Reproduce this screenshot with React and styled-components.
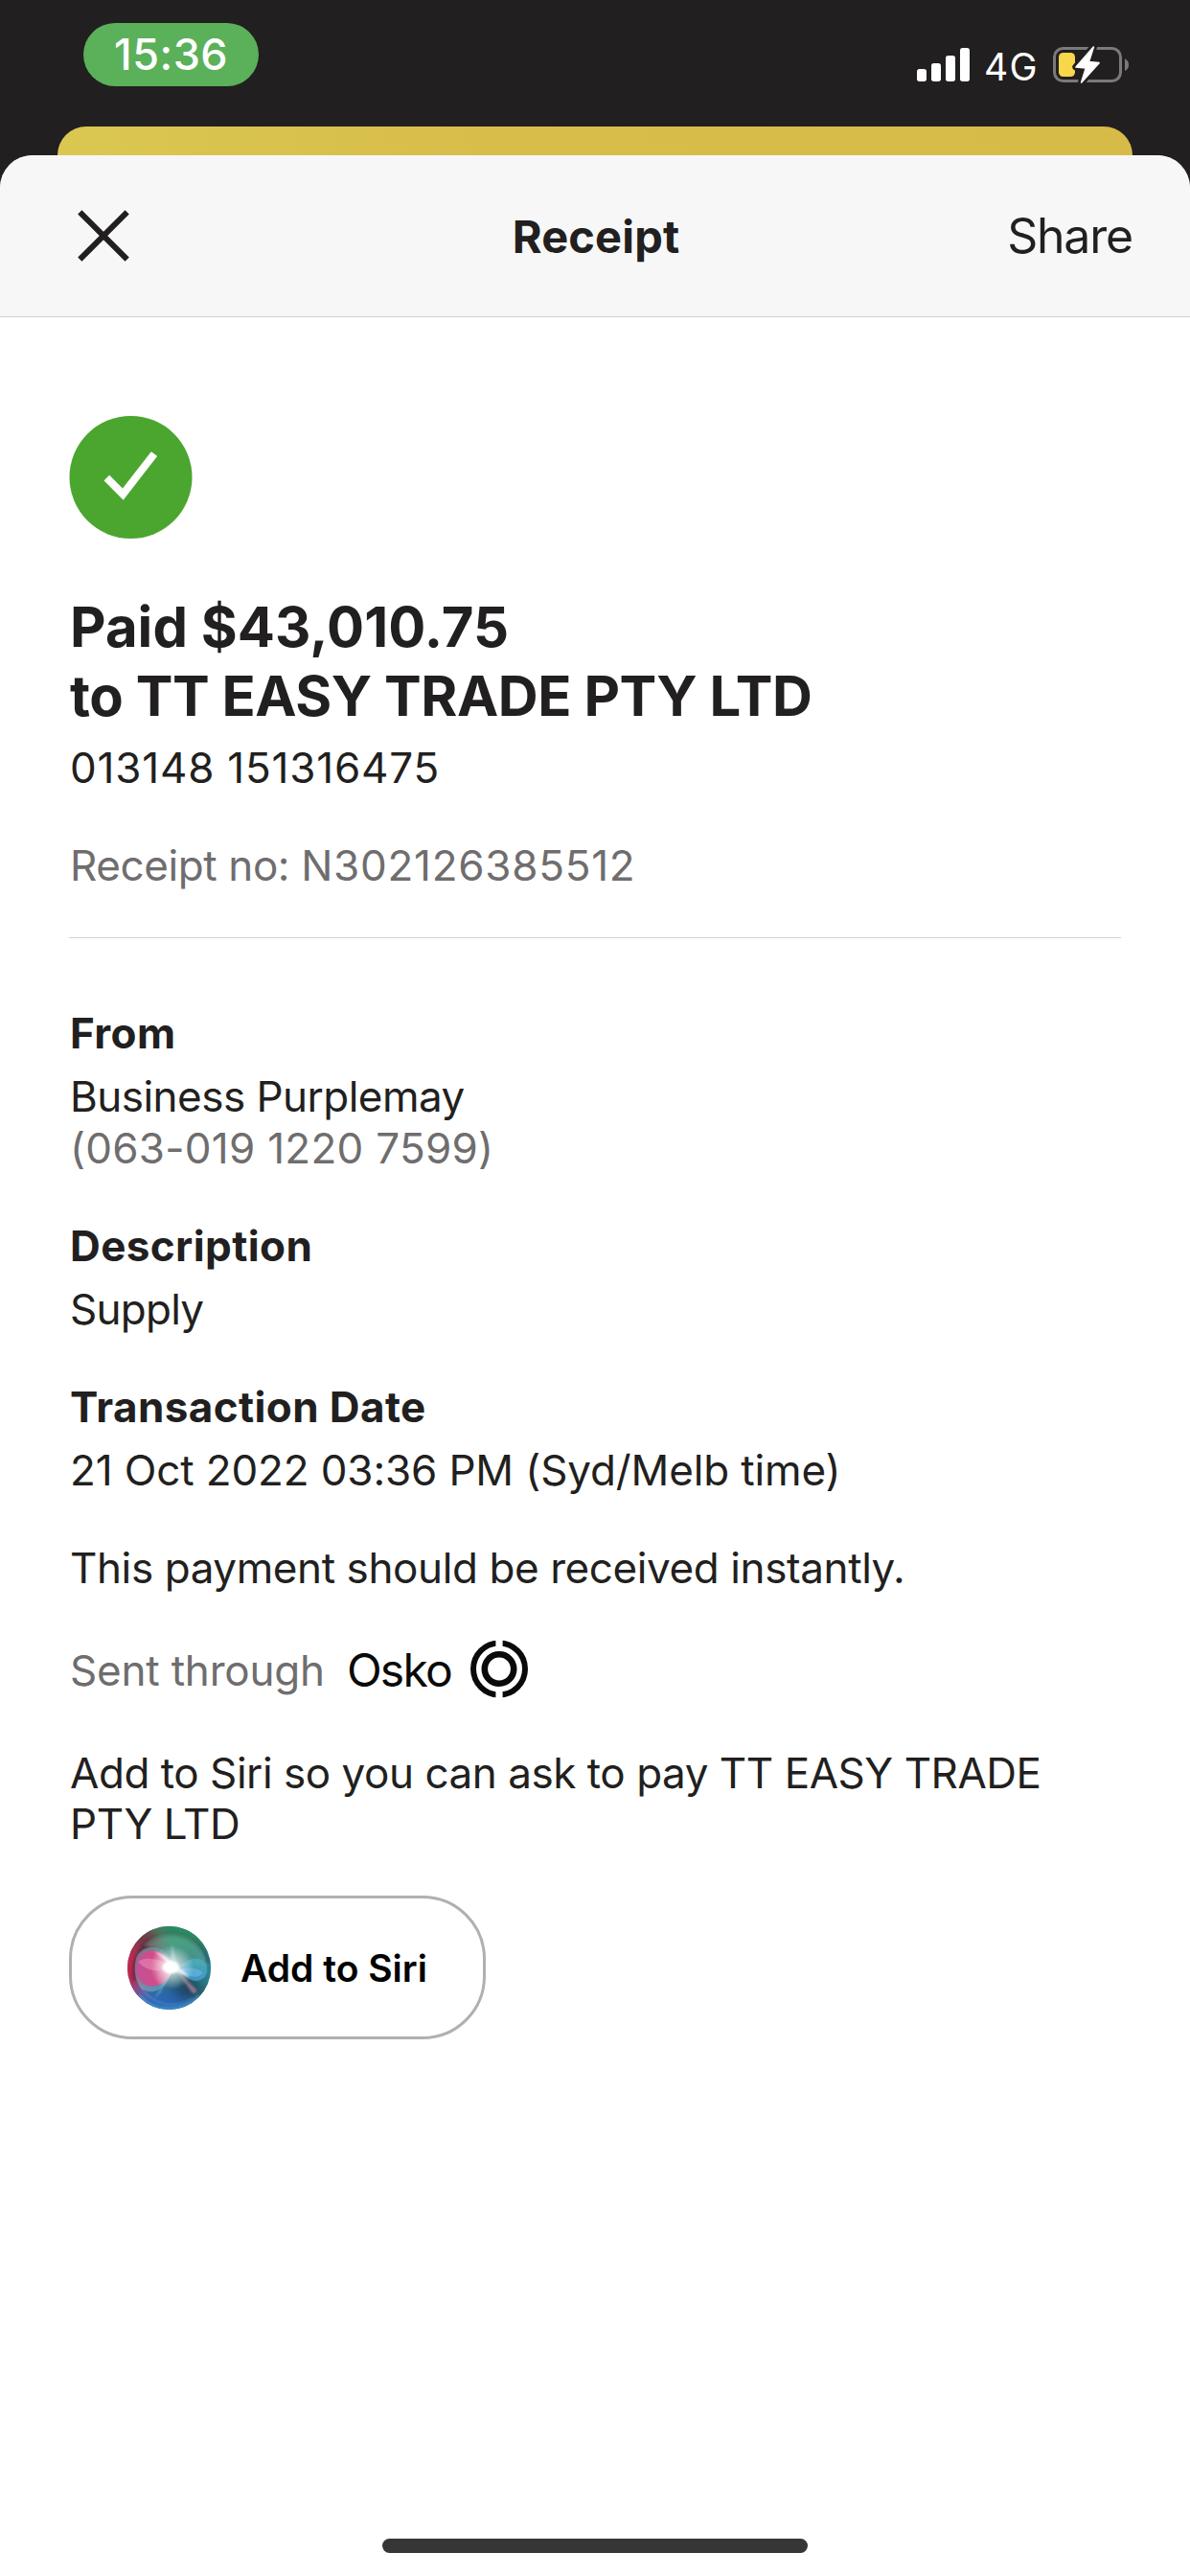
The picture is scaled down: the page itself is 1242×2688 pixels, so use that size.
import React, { Component } from 'react';
import styled, { createGlobalStyle } from 'styled-components';

const GlobalStyle = createGlobalStyle`
:root{
    --mainDark:#221f20;
    --mainGrey:#6f6d6e;
    --navGrey:#f7f7f7;
    --paidGreen:#4ba630;
    --pillGreen:#5bb05a;
}
body{
    margin:0;
    background:var(--mainDark);
    color:var(--mainDark);
    font-family:Inter, "Liberation Sans", sans-serif;
}
p, h1, h2, h3{
    margin:0;
}
`

const PhoneWrapper = styled.div`
display:flex;
flex-direction:column;
width:1242px;
height:2688px;
overflow:hidden;
background:var(--mainDark);
`
const StatusWrapper = styled.header`
display:flex;
justify-content:space-between;
align-items:flex-start;
box-sizing:border-box;
height:132px;
padding:24px 64px 0 87px;
color:#fff;
`
const TimePill = styled.div`
box-sizing:border-box;
width:183px;
height:66px;
padding-left:32px;
border-radius:33px;
background:var(--pillGreen);
font-size:45px;
font-weight:500;
line-height:66px;
letter-spacing:0.5px;
`
const StatusIcons = styled.div`
display:flex;
align-items:flex-start;
padding-top:24px;
`
const SignalIcon = styled.svg`
width:55px;
height:35px;
margin-top:2px;
`
const Network = styled.span`
width:54px;
margin:1px 18px 0 15px;
font-size:39px;
line-height:39px;
letter-spacing:1.2px;
padding-top:1px;
`
const BatteryIcon = styled.svg`
width:79px;
height:39px;
`
const BackCard = styled.div`
height:30px;
margin:0 60px;
border-radius:30px 30px 0 0;
background:linear-gradient(90deg, #dac752 0%, #d8bd4b 40%, #d6bb48 100%);
`
const Sheet = styled.main`
display:flex;
flex-direction:column;
flex:1;
overflow:hidden;
border-radius:34px 34px 0 0;
background:#fff;
`
const NavWrapper = styled.nav`
display:grid;
grid-template-columns:1fr auto 1fr;
align-items:center;
height:168px;
padding:0 60px 0 81px;
border-bottom:1px solid #cfcfcf;
background:var(--navGrey);
`
const CloseButton = styled.button`
display:flex;
width:54px;
height:54px;
padding:0;
border:0;
background:none;
`
const NavTitle = styled.h1`
margin-left:-19px;
font-size:47px;
font-weight:700;
letter-spacing:0.15px;
`
const ShareButton = styled.button`
justify-self:end;
padding:0;
border:0;
background:none;
color:inherit;
font-family:inherit;
font-size:50px;
letter-spacing:-1.2px;
`
const Content = styled.section`
display:flex;
flex-direction:column;
flex:1;
padding:103px 72px 0;
`
const PaidIcon = styled.svg`
width:129px;
height:128px;
margin-bottom:57px;
`
const PaidTitle = styled.h2`
margin-bottom:12px;
padding-left:1px;
font-size:58px;
font-weight:700;
line-height:71.5px;
letter-spacing:0.05px;
span{
    display:block;
    letter-spacing:-0.44px;
}
`
const Text = styled.p`
padding-left:1px;
color:${props => props.$muted ? 'var(--mainGrey)' : 'inherit'};
font-size:44px;
line-height:${props => props.$leading || 54}px;
letter-spacing:${props => props.$tracking || 0}px;
`
const ReceiptNumber = styled(Text)`
margin-top:48px;
padding-bottom:48px;
border-bottom:1px solid #d2d2d2;
span{
    letter-spacing:0.75px;
}
`
const Details = styled.div`
display:flex;
flex-direction:column;
gap:48px;
padding-top:72px;
`
const Label = styled.h3`
margin-bottom:12px;
padding-left:1px;
font-size:44px;
font-weight:700;
line-height:54px;
letter-spacing:0.4px;
`
const OskoRow = styled.div`
display:flex;
align-items:center;
height:61px;
${Text}{
    padding-top:2px;
}
`
const OskoName = styled.span`
margin:0 20px 0 23px;
padding-top:1px;
color:#0a0a09;
font-size:48px;
letter-spacing:-1.77px;
`
const OskoIcon = styled.svg`
width:60px;
height:61px;
`
const SiriText = styled.div`
margin-top:4px;
`
const SiriButton = styled.button`
display:flex;
align-items:center;
gap:31px;
box-sizing:border-box;
width:435px;
height:150px;
padding:0 0 0 58px;
border:3px solid #b0b0b0;
border-radius:66px;
background:#fff;
color:#000;
font-family:inherit;
font-size:39px;
font-weight:600;
`
const SiriIcon = styled.svg`
width:87px;
height:87px;
`
const HomeBar = styled.div`
width:444px;
height:15px;
margin:0 auto 24px;
border-radius:8px;
background:#363636;
`

class StatusBar extends Component {
    render() {
        return (
            <StatusWrapper>
                <TimePill>15:36</TimePill>
                <StatusIcons>
                    <SignalIcon viewBox="0 0 165 105" fill="#fff">
                        <rect x="0" y="66" width="30" height="39" rx="8" />
                        <rect x="45" y="48" width="30" height="57" rx="8" />
                        <rect x="90" y="24" width="30" height="81" rx="8" />
                        <rect x="135" y="0" width="30" height="105" rx="8" />
                    </SignalIcon>
                    <Network>4G</Network>
                    <BatteryIcon viewBox="0 0 237 117">
                        <rect x="4.5" y="7.5" width="207" height="102" rx="27" fill="none" stroke="#7b797a" strokeWidth="9" />
                        <path d="M225 40 Q237 46 237 59 Q237 72 225 78 Z" fill="#7b797a" />
                        <rect x="18" y="21" width="51" height="75" rx="14" fill="#f8d74a" />
                        <path d="M127 3 L72 66 L103 69 L89 114 L144 53 L112 50 Z" fill="#221f20" stroke="#221f20" strokeWidth="22" strokeLinejoin="round" />
                        <path d="M127 3 L72 66 L103 69 L89 114 L144 53 L112 50 Z" fill="#fff" stroke="#fff" strokeWidth="5" strokeLinejoin="round" />
                    </BatteryIcon>
                </StatusIcons>
            </StatusWrapper>
        );
    }
}

class Navbar extends Component {
    render() {
        return (
            <NavWrapper>
                <CloseButton aria-label="Close">
                    <svg width="54" height="54" viewBox="0 0 162 162" stroke="#221f20" strokeWidth="18">
                        <path d="M7 7 L155 155 M155 7 L7 155" />
                    </svg>
                </CloseButton>
                <NavTitle>Receipt</NavTitle>
                <ShareButton>Share</ShareButton>
            </NavWrapper>
        );
    }
}

class SiriOrb extends Component {
    render() {
        return (
            <SiriIcon viewBox="39 60 260 260">
                <defs>
                    <clipPath id="orb"><circle cx="169" cy="190" r="130" /></clipPath>
                    <filter id="soft" x="-50%" y="-50%" width="200%" height="200%">
                        <feGaussianBlur stdDeviation="20" />
                    </filter>
                    <filter id="edge" x="-20%" y="-20%" width="140%" height="140%">
                        <feGaussianBlur stdDeviation="3" />
                    </filter>
                    <radialGradient id="glow">
                        <stop offset="0" stopColor="#fff" />
                        <stop offset="0.3" stopColor="#fff" stopOpacity="0.75" />
                        <stop offset="1" stopColor="#fff" stopOpacity="0" />
                    </radialGradient>
                    <linearGradient id="pink" x1="0" y1="0.6" x2="1" y2="0.5">
                        <stop offset="0" stopColor="#c24f9a" />
                        <stop offset="0.5" stopColor="#dc4688" />
                        <stop offset="1" stopColor="#f3a6c6" />
                    </linearGradient>
                    <linearGradient id="blue" x1="0.6" y1="0" x2="0.4" y2="1">
                        <stop offset="0" stopColor="#48b3b8" />
                        <stop offset="1" stopColor="#4d9fe2" />
                    </linearGradient>
                </defs>
                <g clipPath="url(#orb)">
                    <rect x="39" y="60" width="260" height="260" fill="#2e6f74" />
                    <g filter="url(#soft)">
                        <ellipse cx="215" cy="75" rx="110" ry="60" fill="#2b8a63" />
                        <ellipse cx="100" cy="105" rx="45" ry="40" fill="#74303f" />
                        <ellipse cx="40" cy="190" rx="42" ry="90" fill="#c9204f" />
                        <ellipse cx="75" cy="290" rx="55" ry="40" fill="#7b4a9f" />
                        <ellipse cx="155" cy="305" rx="85" ry="55" fill="#2c66b4" />
                        <ellipse cx="295" cy="190" rx="30" ry="60" fill="#2a8796" />
                        <ellipse cx="228" cy="258" rx="45" ry="32" fill="#1a3f5c" />
                    </g>
                    {/* glass rim */}
                    <path d="M62 230 A113 113 0 0 1 290 175" fill="none" stroke="#1d2a2c" strokeOpacity="0.4" strokeWidth="12" filter="url(#edge)" />
                    <path d="M90 120 A113 113 0 0 1 289 185 Q230 180 185 190 Q165 130 90 120 Z" fill="#8fe0c8" fillOpacity="0.28" filter="url(#edge)" />
                    <path d="M78 245 A113 113 0 0 0 240 285" fill="none" stroke="#5fb0e8" strokeOpacity="0.5" strokeWidth="4" filter="url(#edge)" />
                    {/* left lobe */}
                    <path d="M66 160 C82 115 155 108 182 180 C172 245 130 278 88 258 C62 240 58 190 66 160 Z" fill="#8ed2dc" fillOpacity="0.4" />
                    <path d="M182 192 C168 160 150 136 116 136 C82 136 63 165 66 198 C69 232 92 248 118 247 C150 245 172 222 182 192 Z" fill="url(#pink)" fillOpacity="0.92" />
                    <path d="M72 170 C100 150 150 165 186 190 C150 203 98 205 72 170 Z" fill="#ffc2dc" fillOpacity="0.3" />
                    {/* right lobe */}
                    <path d="M188 188 C212 182 225 160 252 161 C276 162 288 178 288 196 C288 216 272 231 250 230 C226 228 210 205 188 188 Z" fill="url(#blue)" fillOpacity="0.75" />
                    <path d="M200 195 C230 185 262 190 275 205 C262 225 225 220 200 195 Z" fill="#7cc8fa" fillOpacity="0.4" />
                    {/* rays */}
                    <path d="M190 195 L255 258 Q253 275 240 266 Z" fill="#d98aab" fillOpacity="0.6" filter="url(#edge)" />
                    <path d="M178 198 L122 288 L142 265 Z" fill="#8fd0ff" fillOpacity="0.6" filter="url(#edge)" />
                    <path d="M172 190 L178 115 L196 185 Z" fill="#d7fff2" fillOpacity="0.35" filter="url(#edge)" />
                    <circle cx="178" cy="188" r="68" fill="url(#glow)" fillOpacity="0.85" />
                    <path d="M120 138 Q158 148 188 181 Q212 196 232 218 Q205 210 180 198 Q158 160 120 138 Z" fill="#fff" fillOpacity="0.7" filter="url(#edge)" />
                    <ellipse cx="174" cy="188" rx="26" ry="19" fill="#fff" filter="url(#edge)" />
                    <path d="M75 275 A127 127 0 0 0 263 275" fill="none" stroke="#4aa0dd" strokeOpacity="0.7" strokeWidth="8" filter="url(#edge)" />
                </g>
            </SiriIcon>
        );
    }
}

class Receipt extends Component {
    render() {
        return (
            <Content>
                <PaidIcon viewBox="0 0 387 384">
                    <circle cx="193.5" cy="192" r="192" fill="var(--paidGreen)" />
                    <path d="M118 194 L169 245 L267 119" fill="none" stroke="#fff" strokeWidth="24" />
                </PaidIcon>
                <PaidTitle>
                    Paid $43,010.75
                    <span>to TT EASY TRADE PTY LTD</span>
                </PaidTitle>
                <Text $tracking={0.8}>013148 151316475</Text>
                <ReceiptNumber $muted $tracking={-0.4}>Receipt no: <span>N302126385512</span></ReceiptNumber>
                <Details>
                    <div>
                        <Label>From</Label>
                        <Text $tracking={-0.52}>Business Purplemay</Text>
                        <Text $muted $tracking={0.26}>(063-019 1220 7599)</Text>
                    </div>
                    <div>
                        <Label>Description</Label>
                        <Text $tracking={-0.75}>Supply</Text>
                    </div>
                    <div>
                        <Label>Transaction Date</Label>
                        <Text $tracking={-0.13}>21 Oct 2022 03:36 PM (Syd/Melb time)</Text>
                    </div>
                    <Text $tracking={-0.4}>This payment should be received instantly.</Text>
                    <OskoRow>
                        <Text $muted $tracking={-0.2}>Sent through</Text>
                        <OskoName>Osko</OskoName>
                        <OskoIcon viewBox="0 0 60 61">
                            <g fill="none" stroke="#0a0a09">
                                <circle cx="30" cy="30.5" r="27" strokeWidth="6" />
                                <circle cx="30" cy="30.5" r="15.2" strokeWidth="6.6" />
                            </g>
                            <path d="M26.4 0 H33.6 V8 H26.4 Z M26.4 53 H33.6 V61 H26.4 Z" fill="#fff" />
                        </OskoIcon>
                    </OskoRow>
                    <SiriText>
                        <Text $tracking={-0.46} $leading={53}>Add to Siri so you can ask to pay TT EASY TRADE PTY LTD</Text>
                    </SiriText>
                    <SiriButton>
                        <SiriOrb />
                        Add to Siri
                    </SiriButton>
                </Details>
            </Content>
        );
    }
}

class App extends Component {
    render() {
        return (
            <PhoneWrapper>
                <GlobalStyle />
                <StatusBar />
                <BackCard />
                <Sheet>
                    <Navbar />
                    <Receipt />
                    <HomeBar />
                </Sheet>
            </PhoneWrapper>
        );
    }
}

export default App;
